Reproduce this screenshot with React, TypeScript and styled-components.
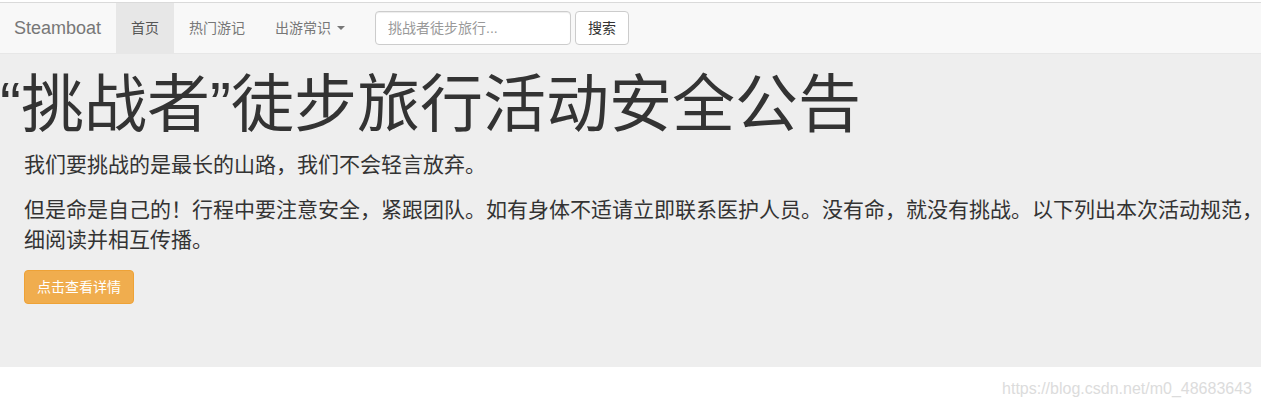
import React from "react";
import styled, { createGlobalStyle } from "styled-components";

const GlobalStyle = createGlobalStyle`
  html, body {
    margin: 0;
    padding: 0;
    overflow: hidden;
    background: #fff;
  }
  body {
    padding-top: 2px;
    font-family: "Liberation Sans", "Noto Sans CJK SC", sans-serif;
    font-size: 14px;
    line-height: 1.42857;
    color: #333;
  }
  * { box-sizing: border-box; }
`;

const Navbar = styled.nav`
  display: flex;
  align-items: stretch;
  height: 52px;
  background: #f8f8f8;
  border-top: 1px solid #dadada;
  border-bottom: 1px solid #e7e7e7;
`;

const Brand = styled.a`
  display: block;
  padding: 15px 15px 15px 14px;
  font-size: 18px;
  line-height: 20px;
  color: #777;
  text-decoration: none;
`;

const NavList = styled.ul`
  display: flex;
  list-style: none;
  margin: 0;
  padding: 0;
`;

const NavLink = styled.a<{ $active?: boolean }>`
  display: flex;
  align-items: center;
  height: 50px;
  padding: 0 15px;
  line-height: 20px;
  color: ${(p) => (p.$active ? "#555" : "#777")};
  background: ${(p) => (p.$active ? "#e7e7e7" : "transparent")};
  text-decoration: none;
`;

const Caret = styled.span`
  display: inline-block;
  width: 0;
  height: 0;
  margin-left: 6px;
  border-top: 4px solid #777;
  border-left: 4px solid transparent;
  border-right: 4px solid transparent;
`;

const SearchForm = styled.form`
  display: flex;
  align-items: flex-start;
  gap: 4px;
  padding: 8px 15px 0;
`;

const SearchInput = styled.input`
  width: 196px;
  height: 34px;
  padding: 6px 12px;
  font-family: inherit;
  font-size: 14px;
  color: #555;
  background: #fff;
  border: 1px solid #ccc;
  border-radius: 4px;
  box-shadow: inset 0 1px 1px rgba(0, 0, 0, 0.075);
  outline: none;
  &::placeholder {
    color: #999;
  }
`;

const SearchButton = styled.button`
  height: 34px;
  padding: 6px 12px;
  font-family: inherit;
  font-size: 14px;
  line-height: 20px;
  color: #333;
  background: #fff;
  border: 1px solid #ccc;
  border-radius: 4px;
`;

const Jumbotron = styled.section`
  background: #eee;
  padding: 0 0 48px;
  display: flow-root;
`;

const Title = styled.h1`
  margin: 16px 0 11px;
  font-size: 63px;
  line-height: 69px;
  font-weight: 400;
  color: #333;
`;

const Body = styled.div`
  padding: 0 0 0 24px;
`;

const Lead = styled.p<{ $nowrap?: boolean }>`
  margin: 0 0 15px;
  font-size: 21px;
  line-height: 30px;
  font-weight: 400;
  white-space: ${(p) => (p.$nowrap ? "nowrap" : "normal")};
`;

const ButtonRow = styled.p`
  margin: 0 0 15px;
`;

const WarningButton = styled.a`
  display: inline-block;
  height: 34px;
  padding: 6px 12px;
  font-size: 14px;
  line-height: 20px;
  color: #fff;
  background: #f0ad4e;
  border: 1px solid #eea236;
  border-radius: 4px;
  text-decoration: none;
`;

const Watermark = styled.footer`
  padding: 12px 9px 0 0;
  text-align: right;
  font-family: "Liberation Sans", sans-serif;
  font-size: 16px;
  line-height: 20px;
  color: #dcdcdc;
`;

export default function App() {
  return (
    <>
      <GlobalStyle />
      <Navbar>
        <Brand href="#">Steamboat</Brand>
        <NavList>
          <li>
            <NavLink href="#" $active>
              首页
            </NavLink>
          </li>
          <li>
            <NavLink href="#">热门游记</NavLink>
          </li>
          <li>
            <NavLink href="#">
              出游常识
              <Caret />
            </NavLink>
          </li>
        </NavList>
        <SearchForm onSubmit={(e) => e.preventDefault()}>
          <SearchInput placeholder="挑战者徒步旅行..." />
          <SearchButton type="submit">搜索</SearchButton>
        </SearchForm>
      </Navbar>
      <Jumbotron>
        <Title>“挑战者”徒步旅行活动安全公告</Title>
        <Body>
          <Lead>我们要挑战的是最长的山路，我们不会轻言放弃。</Lead>
          <Lead $nowrap>
            但是命是自己的！行程中要注意安全，紧跟团队。如有身体不适请立即联系医护人员。没有命，就没有挑战。以下列出本次活动规范，
            <br />
            细阅读并相互传播。
          </Lead>
          <ButtonRow>
            <WarningButton href="#">点击查看详情</WarningButton>
          </ButtonRow>
        </Body>
      </Jumbotron>
      <Watermark>https://blog.csdn.net/m0_48683643</Watermark>
    </>
  );
}
